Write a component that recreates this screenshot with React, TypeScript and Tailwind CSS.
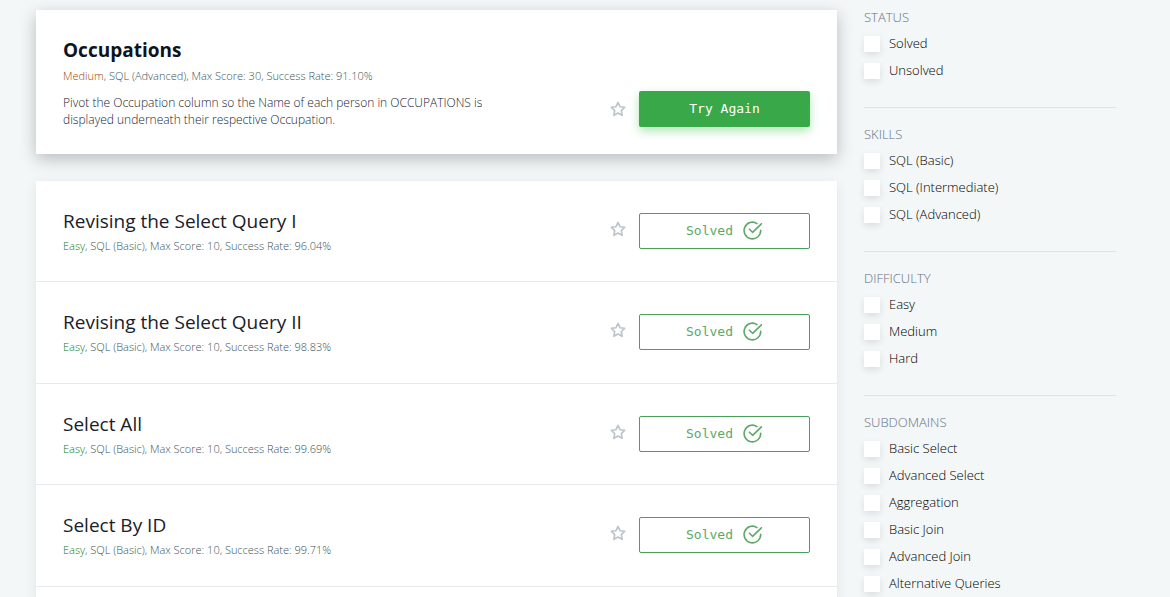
type Challenge = {
  title: string;
  rate: string;
};

type FilterGroup = {
  heading: string;
  options: string[];
};

const challenges: Challenge[] = [
  { title: "Revising the Select Query I", rate: "96.04%" },
  { title: "Revising the Select Query II", rate: "98.83%" },
  { title: "Select All", rate: "99.69%" },
  { title: "Select By ID", rate: "99.71%" },
];

const filters: FilterGroup[] = [
  { heading: "STATUS", options: ["Solved", "Unsolved"] },
  { heading: "SKILLS", options: ["SQL (Basic)", "SQL (Intermediate)", "SQL (Advanced)"] },
  { heading: "DIFFICULTY", options: ["Easy", "Medium", "Hard"] },
  {
    heading: "SUBDOMAINS",
    options: [
      "Basic Select",
      "Advanced Select",
      "Aggregation",
      "Basic Join",
      "Advanced Join",
      "Alternative Queries",
    ],
  },
];

function StarButton({ title }: { title: string }) {
  return (
    <button type="button" aria-label={`Bookmark ${title}`} className="shrink-0 text-[#bcc3ca]">
      <svg width="16" height="16" viewBox="0 0 16 16" fill="none" stroke="currentColor" strokeWidth="1.6" strokeLinejoin="round">
        <path d="M8 1.4 10 5.7 14.7 6.3 11.3 9.6 12.2 14.3 8 12 3.8 14.3 4.7 9.6 1.3 6.3 6 5.7Z" />
      </svg>
    </button>
  );
}

function CheckIcon() {
  return (
    <svg width="20" height="20" viewBox="0 0 20 20" fill="none" stroke="currentColor" strokeWidth="1.6" strokeLinecap="round" strokeLinejoin="round" aria-hidden="true">
      <path d="M14 2.6A8.3 8.3 0 1 0 17.7 9.2" />
      <path d="M6.4 8.2 9.6 11.3 18.4 2.8" />
    </svg>
  );
}

function ChallengeRow({ title, rate }: Challenge) {
  return (
    <li className="flex min-h-[101px] items-start border-b border-[#e7eaec] px-[27px] pt-7 even:min-h-[102px]">
      <div className="min-w-0 flex-1">
        <h2 className="text-[19px] leading-6 text-[#1a202a]">
          <a href="#challenge">{title}</a>
        </h2>
        <p className="mt-1 text-[11px] leading-[18px] font-light text-[#3c5559]">
          <span className="text-[#058018]">Easy</span>, SQL (Basic), Max Score: 10, Success Rate: {rate}
        </p>
      </div>
      <div className="mt-1 flex shrink-0 items-center gap-[13px]">
        <div className="flex pb-1">
          <StarButton title={title} />
        </div>
        <button
          type="button"
          className="flex h-9 w-[171px] items-center justify-center gap-[10px] rounded-xs border border-[#4a9f5b] font-['DejaVu_Sans_Mono',monospace] text-[13px] text-[#5da868]"
        >
          Solved
          <CheckIcon />
        </button>
      </div>
    </li>
  );
}

function FilterSection({ heading, options }: FilterGroup) {
  return (
    <fieldset className="mb-[18px] border-b border-[#dde2e6] pb-[23px] last:border-b-0">
      <legend className="text-[13px] leading-4 font-light text-[#677184]">{heading}</legend>
      <div className="flex flex-col pt-[5px]">
        {options.map((option) => (
          <label key={option} className="flex h-[27px] items-center gap-[9px] text-[13px] font-light text-black">
            <input
              type="checkbox"
              className="size-4 shrink-0 appearance-none bg-white shadow-[0_3px_7px_rgba(0,0,0,0.1)] checked:bg-[#39a848]"
            />
            {option}
          </label>
        ))}
      </div>
    </fieldset>
  );
}

export default function App() {
  return (
    <div className="flex h-screen items-start gap-[27px] overflow-hidden bg-[#f3f7f7] pr-[54px] pl-9 font-['Open_Sans',sans-serif]">
      <main className="min-w-0 flex-1 pt-[10px]">
        <section className="flex items-start bg-white px-[27px] pt-7 pb-[26px] shadow-[0_5px_16px_rgba(0,0,0,0.24)]">
          <div className="min-w-0 flex-1">
            <h2 className="text-[19px] leading-6 font-bold text-[#0e141e]">
              <a href="#occupations">Occupations</a>
            </h2>
            <p className="mt-1 text-[11px] leading-5 font-light text-[#3c5559]">
              <span className="text-[#a84600]">Medium</span>, SQL (Advanced), Max Score: 30, Success Rate: 91.10%
            </p>
            <p className="mt-2 max-w-[440px] text-[12px] leading-[17px] font-light text-[#1a2432]">
              Pivot the Occupation column so the Name of each person in OCCUPATIONS is displayed underneath their
              respective Occupation.
            </p>
          </div>
          <div className="mt-[53px] flex shrink-0 items-center gap-[13px]">
            <StarButton title="Occupations" />
            <button
              type="button"
              className="h-9 w-[171px] rounded-xs bg-[#39a848] font-['DejaVu_Sans_Mono',monospace] text-[13px] text-white shadow-[0_4px_10px_rgba(57,190,72,0.4)]"
            >
              Try Again
            </button>
          </div>
        </section>
        <ul className="mt-[27px] bg-white pb-24 shadow-[0_2px_12px_rgba(0,0,0,0.08)]">
          {challenges.map((challenge) => (
            <ChallengeRow key={challenge.title} {...challenge} />
          ))}
        </ul>
      </main>
      <aside className="w-[252px] shrink-0 pt-[9px]">
        {filters.map((group) => (
          <FilterSection key={group.heading} {...group} />
        ))}
      </aside>
    </div>
  );
}
